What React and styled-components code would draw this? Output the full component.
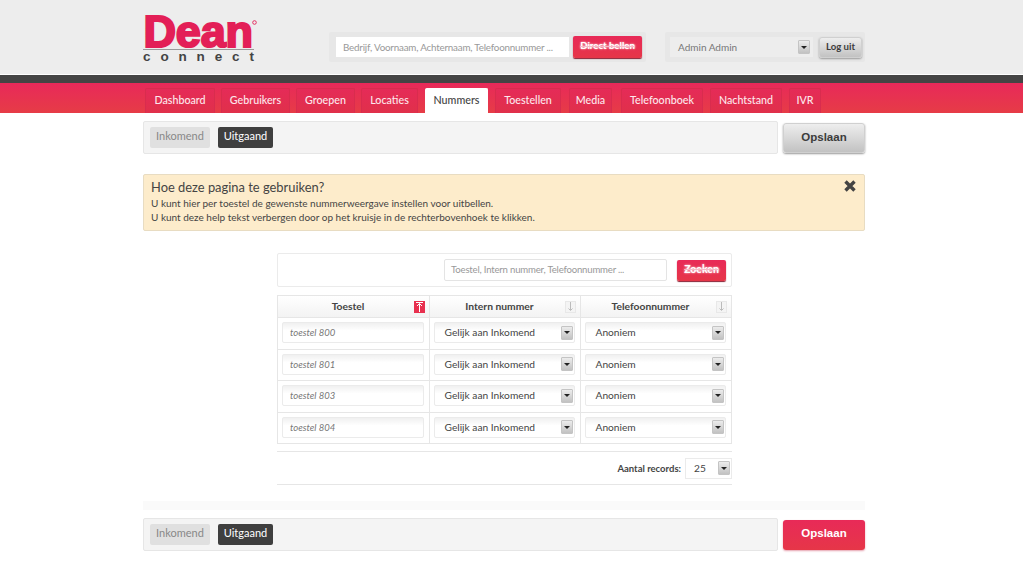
import React from 'react';
import styled, { createGlobalStyle } from 'styled-components';

const Global = createGlobalStyle`
  html, body { margin: 0; padding: 0; background: #fff; }
  body { font-family: Lato, "Noto Sans", sans-serif; color: #444; font-size: 11px; }
  * { box-sizing: border-box; }
`;
const red = 'linear-gradient(#e82a58, #e63648)';
const Page = styled.div`width: 1023px; height: 584px; overflow: hidden;`;
const Header = styled.header`
  height: 75px; background: #ededed; border-bottom: 1px solid #fff;
  padding: 0 0 0 143px; display: flex;
`;
const Logo = styled.svg`width: 116px; height: 64px; margin: 0 70px 0 0; flex: none; overflow: visible;`;
const SearchGroup = styled.div`
  margin-top: 32px; height: 30px; background: #e7e7e7; border-radius: 2px; padding: 4px 4px 4px 7px;
  display: flex; gap: 4px; width: 317px; margin-right: 19px; align-items: center;
`;
const HeaderInput = styled.div`
  flex: none; width: 233px; height: 20px; background: #fff; color: #999; font-size: 9.8px; letter-spacing: -0.2px; line-height: 20px; padding-left: 7px; white-space: nowrap; overflow: hidden;
`;
const RedSmall = styled.div`
  flex: none; width: ${p => p.$w}px; height: ${p => p.$h}px; background: ${red}; border-radius: 2px; color: #fff; font-weight: 700;
  font-size: ${p => p.$fs || 10}px; text-align: center; line-height: ${p => p.$h - 2}px; box-shadow: 0 1px 1px #8a2033;
  text-shadow: 0 0 2px #fff;
  text-decoration: line-through; text-decoration-color: #f6b9c5;
`;
const UserGroup = styled.div`
  margin-top: 32px; height: 30px; background: #e7e7e7; border-radius: 2px; padding: 5px;
  display: flex; gap: 6px; width: 200px; align-items: center;
`;
const UserSelect = styled.div`
  flex: none; width: 143px; height: 20px; background: #ededed; color: #777; font-size: 10px; line-height: 21px; padding: 0 3px 0 8px;
  display: flex; justify-content: space-between; align-items: center;
`;
const GreyBtn = styled.div`
  background: linear-gradient(#eeeeee, #c2c2c2); border-radius: 3px; color: #3c3c3c; text-align: center; font-weight: 700;
  box-shadow: 0 1px 2px #999; border: 1px solid #d0d0d0; flex: none;
`;
const LogoutBtn = styled(GreyBtn)`width: 43px; height: 21px; font-size: 9.6px; line-height: 18px;`;
const DarkBar = styled.div`height: 8px; background: #444;`;
const Nav = styled.nav`
  height: 30px; background: linear-gradient(#e8295a, #e63c46); padding: 5px 0 0 145px; display: flex;
`;
const Tab = styled.div`
  width: ${p => p.$w}px; margin-right: ${p => p.$m}px; height: 25px; border-radius: 2px 2px 0 0;
  background: ${p => p.$active ? '#fff' : 'linear-gradient(#e52b58, #e0304a)'};
  border: 1px solid ${p => p.$active ? '#fff' : '#d92c4e'}; border-bottom: 0;
  color: ${p => p.$active ? '#444' : '#fde8ec'}; text-align: center; font-size: 10.7px; line-height: 21px; font-weight: 500; white-space: nowrap;
`;
const Main = styled.main`padding: 8px 158px 0 143px;`;
const ToolRow = styled.div`display: flex; gap: 5px; align-items: center;`;
const Toolbar = styled.div`
  width: 635px; height: 33px; background: #f4f4f4; border: 1px solid #e6e6e6; border-radius: 2px;
  display: flex; gap: 7px; padding: 5px 6px;
`;
const Pill = styled.div`
  height: 21px; line-height: 18px; font-size: 11px; border-radius: 2px; text-align: center;
  width: ${p => p.$dark ? 55 : 60}px; margin-left: ${p => p.$dark ? 1 : 0}px;
  background: ${p => p.$dark ? '#3f3f3f' : '#e0e0e0'}; color: ${p => p.$dark ? '#fff' : '#888'};
`;
const SaveGrey = styled(GreyBtn)`width: 82px; height: 30px; font: 700 11.5px/27px "Liberation Sans", sans-serif;`;
const SaveRed = styled.div`
  width: 82px; height: 30px; background: ${red}; border-radius: 3px; color: #fff; text-align: center; flex: none;
  font: 700 11.5px/27px "Liberation Sans", sans-serif; box-shadow: 0 1px 2px #e6a0ae;
`;
const Help = styled.section`
  margin-top: 20px; height: 57px; background: #fdeccb; border: 1px solid #e8dcc2; border-radius: 2px; padding: 4px 7px; position: relative;
`;
const HelpTitle = styled.div`font-size: 12.9px; line-height: 17px; color: #444;`;
const HelpText = styled.div`font-size: 10px; line-height: 14px; color: #444;`;
const Close = styled.svg`position: absolute; right: 7px; top: 4px;`;
const Center = styled.div`width: 455px; margin: 22px 0 0 134px;`;
const SearchBox = styled.div`
  height: 34px; border: 1px solid #ebebeb; display: flex; justify-content: flex-end; align-items: center; gap: 10px; padding-right: 5px; border-radius: 2px;
`;
const SearchInput = styled.div`
  width: 223px; height: 22px; border: 1px solid #e4e4e4; border-radius: 2px; font-size: 9.6px; letter-spacing: -0.2px; color: #999; line-height: 20px; padding-left: 6px; white-space: nowrap; overflow: hidden;
`;
const Table = styled.div`margin-top: 8px; border: 1px solid #e6e6e6;`;
const HeadRow = styled.div`display: grid; grid-template-columns: 151px 151px 1fr; height: 21px; background: linear-gradient(#fff, #f3f3f3);`;
const Th = styled.div`
  position: relative; text-align: center; font-weight: 700; font-size: 10.3px; line-height: 20px; color: #444; padding-right: 11px;
  & + & { border-left: 1px solid #e6e6e6; }
`;
const Sort = styled.span`
  position: absolute; right: 4px; top: 5px; width: 11px; height: 12px; display: flex; align-items: center; justify-content: center;
  background: ${p => p.$on ? '#e8304f' : '#f4f4f4'}; border: ${p => p.$on ? 0 : '1px solid #e8e8e8'};
`;
const Row = styled.div`
  display: grid; grid-template-columns: 151px 151px 1fr; height: 31.5px; border-top: 1px solid #e6e6e6;
`;
const Td = styled.div`
  padding: 4px 5px 4px 4px;
  & + & { border-left: 1px solid #e6e6e6; }
`;
const Field = styled.div`
  height: 21px; border: 1px solid #ebebeb; background: linear-gradient(#f0f0f0, #fff 40%); border-radius: 2px;
  font-size: ${p => p.$italic ? 9.5 : 10.2}px; line-height: 19px; padding: 0 1px 0 ${p => p.$italic ? 7 : 9.5}px; color: ${p => p.$italic ? '#777' : '#444'};
  font-style: ${p => p.$italic ? 'italic' : 'normal'}; display: flex; justify-content: space-between; align-items: center;
`;
const Arrow = styled.span`
  flex: none; width: 12px; height: 14px; border: 1px solid #c4c4c4; background: linear-gradient(#ececec, #c2c2c2); border-radius: 1px;
  display: flex; align-items: center; justify-content: center;
  &::after { content: ""; border: 3px solid transparent; border-top: 3px solid #222; border-bottom: 0; }
`;
const Pager = styled.div`
  margin-top: 7px; height: 34px; border-top: 1px solid #e6e6e6; border-bottom: 1px solid #e6e6e6;
  display: flex; justify-content: flex-end; align-items: center; gap: 4px; font-weight: 700; font-size: 9.5px;
`;
const PageSel = styled.div`
  width: 47px; height: 21px; border: 1px solid #ebebeb; font-weight: 400; font-size: 10.2px; line-height: 20px; padding: 0 1px 0 8px; display: flex; justify-content: space-between; align-items: center;
`;
const Fade = styled.div`margin-top: 16px; height: 9px; background: #fafafa;`;
const Bottom = styled(ToolRow)`margin-top: 8px;`;

const tabs = [['Dashboard',70,6],['Gebruikers',69,6],['Groepen',59,6],['Locaties',57,7],['Nummers',63,7],['Toestellen',66,8],['Media',43,9],['Telefoonboek',82,7],['Nachtstand',72,7],['IVR',32,0]];
const rows = ['toestel 800','toestel 801','toestel 803','toestel 804'];
const SortIcon = () => (
  <svg width="9" height="10" viewBox="0 0 9 10"><path d="M4.5 1.5V10M2 4 4.5 1.5 7 4M1 .5h7" stroke="#fff" strokeWidth="1" fill="none"/></svg>
);
const DownIcon = () => (
  <svg width="9" height="10" viewBox="0 0 9 10"><path d="M4.5 0v8M2.5 6.5l2 2 2-2" stroke="#bbb" strokeWidth="1" fill="none"/></svg>
);
const Tools = () => (<><Pill>Inkomend</Pill><Pill $dark>Uitgaand</Pill></>);

export default function App() {
  return (
    <Page>
      <Global />
      <Header>
        <Logo viewBox="0 0 116 64">
          <text x="0.5" y="46.5" textLength="109.5" lengthAdjust="spacing" fontFamily="Liberation Sans" fontWeight="700" fontSize="45" fill="#e31f57" stroke="#e31f57" strokeWidth="2.2">Dean</text>
          <circle cx="111.5" cy="22.5" r="1.8" fill="none" stroke="#e31f57" strokeWidth="0.9" />
          <rect x="0" y="49" width="111" height="1" fill="#9a9a9a" />
          <text x="0" y="60.5" textLength="111" lengthAdjust="spacing" fontFamily="Liberation Sans" fontWeight="700" fontSize="13.5" fill="#444">connect</text>
        </Logo>
        <SearchGroup>
          <HeaderInput>Bedrijf, Voornaam, Achternaam, Telefoonnummer ...</HeaderInput>
          <RedSmall $w={69} $h={22} $fs={9.6}>Direct bellen</RedSmall>
        </SearchGroup>
        <UserGroup>
          <UserSelect>Admin Admin<Arrow /></UserSelect>
          <LogoutBtn>Log uit</LogoutBtn>
        </UserGroup>
      </Header>
      <DarkBar />
      <Nav>
        {tabs.map(([t,w,m]) => <Tab key={t} $w={w} $m={m} $active={t==='Nummers'}>{t}</Tab>)}
      </Nav>
      <Main>
        <ToolRow>
          <Toolbar><Tools /></Toolbar>
          <SaveGrey>Opslaan</SaveGrey>
        </ToolRow>
        <Help>
          <HelpTitle>Hoe deze pagina te gebruiken?</HelpTitle>
          <HelpText>U kunt hier per toestel de gewenste nummerweergave instellen voor uitbellen.</HelpText>
          <HelpText>U kunt deze help tekst verbergen door op het kruisje in de rechterbovenhoek te klikken.</HelpText>
          <Close width="14" height="14" viewBox="0 0 14 14"><path d="M2.5 2.5l9 9M11.5 2.5l-9 9" stroke="#444" strokeWidth="3.4"/></Close>
        </Help>
        <Center>
          <SearchBox>
            <SearchInput>Toestel, Intern nummer, Telefoonnummer ...</SearchInput>
            <RedSmall $w={49} $h={21} $fs={10.5}>Zoeken</RedSmall>
          </SearchBox>
          <Table>
            <HeadRow>
              <Th>Toestel<Sort $on><SortIcon /></Sort></Th>
              <Th>Intern nummer<Sort><DownIcon /></Sort></Th>
              <Th>Telefoonnummer<Sort><DownIcon /></Sort></Th>
            </HeadRow>
            {rows.map(r => (
              <Row key={r}>
                <Td><Field $italic>{r}</Field></Td>
                <Td><Field>Gelijk aan Inkomend<Arrow /></Field></Td>
                <Td><Field>Anoniem<Arrow /></Field></Td>
              </Row>
            ))}
          </Table>
          <Pager>Aantal records: <PageSel>25<Arrow /></PageSel></Pager>
        </Center>
        <Fade />
        <Bottom>
          <Toolbar><Tools /></Toolbar>
          <SaveRed>Opslaan</SaveRed>
        </Bottom>
      </Main>
    </Page>
  );
}
